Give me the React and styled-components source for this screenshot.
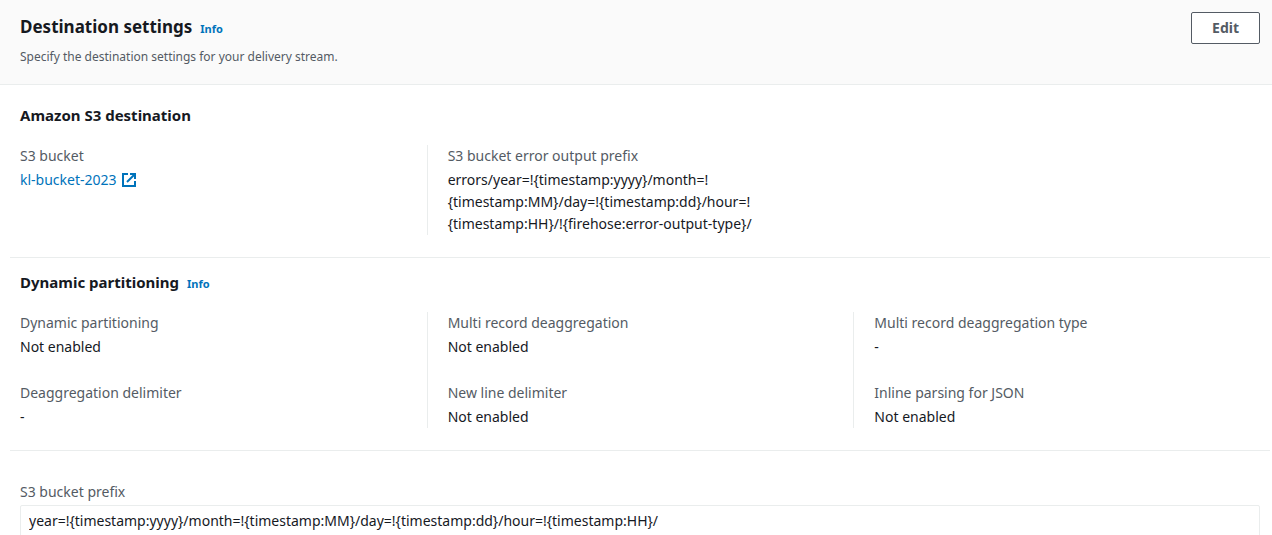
import React from "react";
import styled, { createGlobalStyle } from "styled-components";

const GlobalStyle = createGlobalStyle`
  *, *::before, *::after { box-sizing: border-box; }
  body {
    margin: 0;
    background: #fff;
    color: #16191f;
    font-family: "Noto Sans", "Open Sans", sans-serif;
    font-size: 14px;
    line-height: 22px;
  }
`;

const Page = styled.main`
  max-height: 100vh;
  overflow-x: hidden;
  overflow-y: auto;
  scrollbar-width: none;
`;

const Header = styled.header`
  display: flex;
  justify-content: space-between;
  align-items: flex-start;
  padding: 12px 12px 16px 20px;
  background: #fafafa;
  border-bottom: 1px solid #eaeded;
`;

const TitleRow = styled.div`
  display: flex;
  align-items: baseline;
  gap: 8px;
`;

const Title = styled.h2`
  margin: 0;
  font-size: 17px;
  line-height: 30px;
  font-weight: 700;
`;

const Subtitle = styled.h3`
  margin: 0;
  font-size: 15px;
  line-height: 22px;
  font-weight: 700;
`;

const InfoLink = styled.a`
  color: #0073bb;
  font-size: 11px;
  line-height: 16px;
  font-weight: 700;
  text-decoration: none;
`;

const Description = styled.p`
  margin: 4px 0 0;
  color: #545b64;
  font-size: 12px;
`;

const Button = styled.button`
  height: 32px;
  padding: 0 20px;
  border: 1px solid #545b64;
  border-radius: 2px;
  background: #fff;
  color: #545b64;
  font: inherit;
  font-weight: 700;
`;

const Section = styled.section`
  margin: 0 2px 0 10px;
  padding: ${(p) => p.$top}px 0 22px 10px;
  border-bottom: 1px solid #eaeded;
`;

const Columns = styled.div`
  display: grid;
  grid-template-columns: repeat(3, 1fr);
  margin: 19px -10px 0 -20px;
`;

const Column = styled.dl`
  display: flex;
  flex-direction: column;
  gap: 24px;
  margin: 0;
  padding: 0 20px;

  & + & {
    border-left: 1px solid #eaeded;
  }
`;

const Term = styled.dt`
  color: #545b64;
`;

const Value = styled.dd`
  margin: 2px 0 0;
  max-width: 320px;
`;

const BucketLink = styled.a`
  display: inline-flex;
  align-items: center;
  gap: 4px;
  color: #0073bb;
  text-decoration: none;
`;

const Field = styled.div`
  display: flex;
  flex-direction: column;
  gap: 2px;
  padding: 30px 12px 20px 20px;
`;

const FieldLabel = styled.label`
  color: #545b64;
`;

const TextBox = styled.input`
  width: 100%;
  height: 32px;
  padding: 0 8px 2px;
  border: 1px solid #eaeded;
  border-radius: 2px;
  background: #fff;
  color: #16191f;
  font: inherit;
  outline: none;
`;

const ExternalIcon = () => (
  <svg width="16" height="16" viewBox="0 0 16 16" fill="none" stroke="currentColor" strokeWidth="2" aria-hidden="true">
    <path d="M9 2h5v5" />
    <path d="M6 10l8-8" />
    <path d="M14 9v5H2V2h5" />
  </svg>
);

const Item = ({ label, children }) => (
  <div>
    <Term>{label}</Term>
    <Value>{children}</Value>
  </div>
);

export default function App() {
  return (
    <>
      <GlobalStyle />
      <Page>
        <Header>
          <div>
            <TitleRow>
              <Title>Destination settings</Title>
              <InfoLink href="#destination-info">Info</InfoLink>
            </TitleRow>
            <Description>Specify the destination settings for your delivery stream.</Description>
          </div>
          <Button type="button">Edit</Button>
        </Header>

        <Section $top={19}>
          <Subtitle>Amazon S3 destination</Subtitle>
          <Columns>
            <Column>
              <Item label="S3 bucket">
                <BucketLink href="#kl-bucket-2023">
                  kl-bucket-2023
                  <ExternalIcon />
                </BucketLink>
              </Item>
            </Column>
            <Column>
              <Item label="S3 bucket error output prefix">
                errors/year=!{"{"}timestamp:yyyy{"}"}/month=!<wbr />
                {"{"}timestamp:MM{"}"}/day=!{"{"}timestamp:dd{"}"}/hour=!<wbr />
                {"{"}timestamp:HH{"}"}/!{"{"}firehose:error-output-type{"}"}/
              </Item>
            </Column>
          </Columns>
        </Section>

        <Section $top={13}>
          <TitleRow>
            <Subtitle>Dynamic partitioning</Subtitle>
            <InfoLink href="#partitioning-info">Info</InfoLink>
          </TitleRow>
          <Columns>
            <Column>
              <Item label="Dynamic partitioning">Not enabled</Item>
              <Item label="Deaggregation delimiter">-</Item>
            </Column>
            <Column>
              <Item label="Multi record deaggregation">Not enabled</Item>
              <Item label="New line delimiter">Not enabled</Item>
            </Column>
            <Column>
              <Item label="Multi record deaggregation type">-</Item>
              <Item label="Inline parsing for JSON">Not enabled</Item>
            </Column>
          </Columns>
        </Section>

        <Field>
          <FieldLabel htmlFor="bucket-prefix">S3 bucket prefix</FieldLabel>
          <TextBox
            id="bucket-prefix"
            type="text"
            readOnly
            value="year=!{timestamp:yyyy}/month=!{timestamp:MM}/day=!{timestamp:dd}/hour=!{timestamp:HH}/"
          />
        </Field>
      </Page>
    </>
  );
}
